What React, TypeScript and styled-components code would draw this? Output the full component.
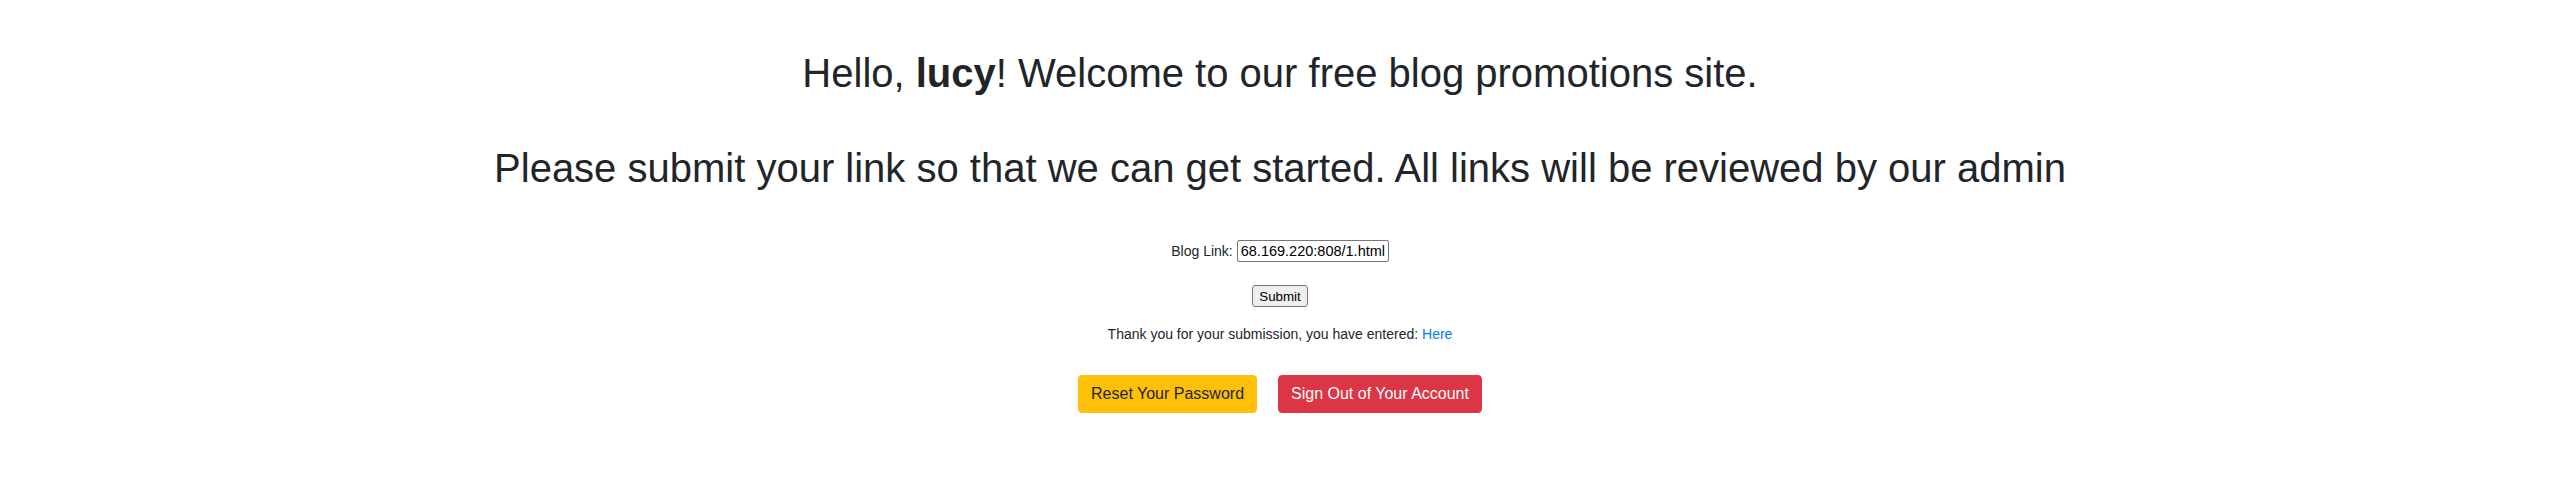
import React from 'react';
import styled, { createGlobalStyle } from 'styled-components';

const GlobalStyle = createGlobalStyle`
  html, body {
    margin: 0;
    padding: 0;
    background: #fff;
  }
  body {
    font-family: "Liberation Sans", Arial, sans-serif;
    color: #212529;
    font-size: 16px;
    line-height: 1.5;
  }
`;

const PageS = styled.main`
  display: flex;
  flex-direction: column;
  align-items: center;
  padding-top: 49px;
  padding-bottom: 40px;
`;

const HeadingS = styled.h1`
  margin: 0;
  font-size: 40px;
  font-weight: 400;
  line-height: 48px;
  text-align: center;
`;

const IntroS = styled(HeadingS)`
  margin-top: 47px;
`;

const FormS = styled.form`
  display: flex;
  flex-direction: column;
  align-items: center;
  margin-top: 48px;
`;

const FieldRowS = styled.label`
  display: flex;
  align-items: center;
  gap: 4px;
  font-size: 14px;
  line-height: 22px;
`;

const LinkInputS = styled.input`
  box-sizing: border-box;
  width: 152px;
  height: 22px;
  padding: 1px 3px;
  border: 1px solid #767676;
  border-radius: 2px;
  font-family: "Liberation Sans", Arial, sans-serif;
  font-size: 14.5px;
  color: #000;
  background: #fff;
`;

const SubmitS = styled.button`
  box-sizing: border-box;
  margin-top: 23px;
  height: 22px;
  padding: 1px 6px;
  border: 1px solid #767676;
  border-radius: 3px;
  background: #efefef;
  font-family: "Liberation Sans", Arial, sans-serif;
  font-size: 13.33px;
  color: #000;
`;

const NoticeS = styled.p`
  margin: 17px 0 0;
  font-size: 14px;
  line-height: 21px;
  text-align: center;

  a {
    color: #007bff;
    text-decoration: none;
  }
`;

const ActionsS = styled.div`
  display: flex;
  gap: 21px;
  margin-top: 30px;
`;

const ActionBtnS = styled.button<{ $variant: 'warning' | 'danger' }>`
  box-sizing: border-box;
  height: 38px;
  padding: 6px 12px;
  border: 1px solid ${p => (p.$variant === 'warning' ? '#ffc107' : '#dc3545')};
  border-radius: 4px;
  background: ${p => (p.$variant === 'warning' ? '#ffc107' : '#dc3545')};
  color: ${p => (p.$variant === 'warning' ? '#212529' : '#fff')};
  font-family: "Liberation Sans", Arial, sans-serif;
  font-size: 16px;
  line-height: 24px;
  cursor: pointer;
`;

export default function App() {
  const [link, setLink] = React.useState('68.169.220:808/1.html');

  return (
    <>
      <GlobalStyle />
      <PageS>
        <HeadingS>
          Hello, <b>lucy</b>! Welcome to our free blog promotions site.
        </HeadingS>
        <IntroS>
          Please submit your link so that we can get started. All links will be reviewed by our admin
        </IntroS>
        <FormS onSubmit={e => e.preventDefault()}>
          <FieldRowS>
            Blog Link:
            <LinkInputS value={link} onChange={e => setLink(e.target.value)} />
          </FieldRowS>
          <SubmitS type="submit">Submit</SubmitS>
        </FormS>
        <NoticeS>
          Thank you for your submission, you have entered: <a href="#">Here</a>
        </NoticeS>
        <ActionsS>
          <ActionBtnS $variant="warning">Reset Your Password</ActionBtnS>
          <ActionBtnS $variant="danger">Sign Out of Your Account</ActionBtnS>
        </ActionsS>
      </PageS>
    </>
  );
}
